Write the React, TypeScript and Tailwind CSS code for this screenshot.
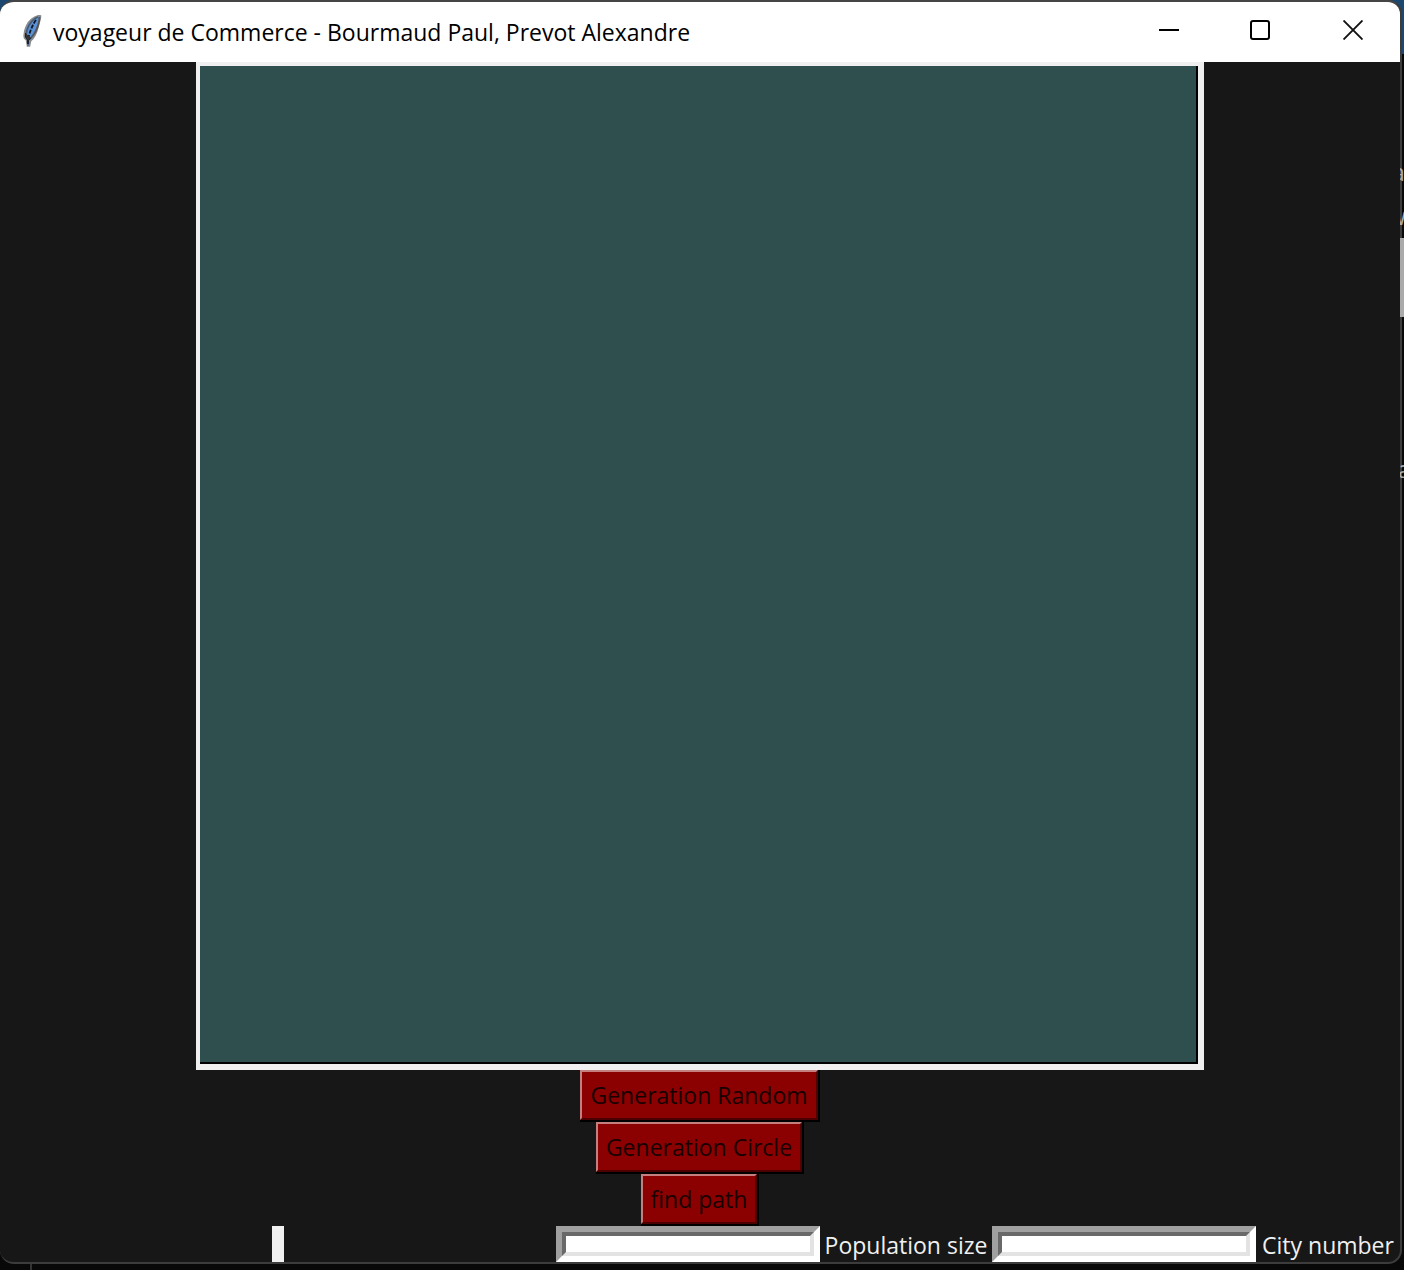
import { useId, useState } from "react";

function Feather() {
  return (
    <svg viewBox="0 0 20 34" className="h-[34px] w-5 shrink-0" aria-hidden="true">
      <path d="M17.500 0.500C12 1.500 6 6 4 12C2.500 16 1.500 19 2.500 23L4.500 25L5.500 31H7.500L8.500 26C12 23 14.500 18 16 12C17 8 18.500 4 18.500 1Z" fill="#5b93d8" stroke="#8a8a8a" strokeWidth="1.600" />
      <path d="M16 2C11 4 7 9 5 15L3.500 22" fill="none" stroke="#4a5a70" strokeWidth="1.800" />
      <path d="M17.500 2C17.500 7 15 15 12 19L8 24" fill="none" stroke="#555" strokeWidth="1.800" />
      <path d="M14 5C11 9 9.500 13 8 17L6 24V31" fill="none" stroke="#0d1522" strokeWidth="1.800" strokeDasharray="4 1.500" />
      <path d="M3.500 18L3.500 22L6 26L9 23" fill="#333" stroke="#222" strokeWidth="1" />
    </svg>
  );
}

function TitleBar() {
  return (
    <header className="flex h-[60px] items-center bg-white pl-[22px] text-black">
      <Feather />
      <h1 className="flex-1 pl-[11px] text-[23px] leading-8 whitespace-nowrap">
        voyageur de Commerce - Bourmaud Paul, Prevot Alexandre
      </h1>
      <div className="flex h-full pb-1">
        <button type="button" aria-label="Minimize" className="grid w-[90px] place-items-center">
          <svg viewBox="0 0 20 20" className="size-5">
            <path d="M0 10H20" stroke="black" strokeWidth="2" />
          </svg>
        </button>
        <button type="button" aria-label="Maximize" className="grid w-[92px] place-items-center">
          <svg viewBox="0 0 20 20" className="size-5">
            <rect x="1" y="1" width="18" height="18" rx="2" fill="none" stroke="black" strokeWidth="2" />
          </svg>
        </button>
        <button type="button" aria-label="Close" className="grid w-[94px] place-items-center">
          <svg viewBox="0 0 20 20" className="size-5">
            <path d="M0.500 0.500L19.500 19.500M19.500 0.500L0.500 19.500" stroke="#111" strokeWidth="1.900" />
          </svg>
        </button>
      </div>
    </header>
  );
}

function ActionButton({ label }: { label: string }) {
  return (
    <button
      type="button"
      className="h-[52px] border-r-2 border-b-2 border-black bg-[#8b0000] text-[23px] leading-8 text-[#180000]"
    >
      <span className="flex h-full items-center border-2 border-t-[#c57f7f] border-r-[#4d0000] border-b-[#4d0000] border-l-[#c57f7f] px-2">
        {label}
      </span>
    </button>
  );
}

function Field({ label, width }: { label: string; width: string }) {
  const id = useId();
  const [value, setValue] = useState("");
  return (
    <>
      <div className="h-9 w-[264px] border-[6px] border-t-[#a0a0a0] border-r-white border-b-white border-l-[#a0a0a0]">
        <input
          id={id}
          value={value}
          onChange={(e) => setValue(e.target.value)}
          className="block h-6 w-full border-4 border-t-[#696969] border-r-[#e3e3e3] border-b-[#e3e3e3] border-l-[#696969] bg-white text-xs text-black outline-none"
        />
      </div>
      <label htmlFor={id} className={`${width} pt-0.5 text-center text-[23px] leading-8 whitespace-nowrap text-[#f0f0f0]`}>
        {label}
      </label>
    </>
  );
}

export default function App() {
  return (
    <div className="flex min-h-screen bg-[#080808] font-['Open_Sans','Noto_Sans',sans-serif]">
      <div className="mr-0.5 flex min-w-0 flex-1 flex-col bg-linear-to-b from-[#1b4770] from-5% to-[#080808] to-5%">
        <main className="overflow-hidden rounded-[14px] border-t-2 border-r-2 border-b-2 border-t-[#454545] border-r-[#3c3c3c] border-b-[#3c3c3c] bg-[#171717]">
          <TitleBar />
          <div className="flex flex-col items-center">
            <div className="border-t-4 border-r-[6px] border-b-[6px] border-l-4 border-[#f0f0f0]">
              <canvas width={996} height={996} className="box-content block border-r-2 border-b-2 border-black bg-[#2f4f4f]" />
            </div>
            <ActionButton label="Generation Random" />
            <ActionButton label="Generation Circle" />
            <ActionButton label="find path" />
          </div>
          <div className="flex h-9 items-center">
            <div className="flex h-full flex-1 justify-center">
              <div className="w-3 bg-[#f0f0f0]" />
            </div>
            <Field label="Population size" width="w-[172px]" />
            <Field label="City number" width="w-[144px]" />
          </div>
        </main>
        <div className="ml-[30px] h-1.5 w-0.5 bg-[#333]" />
      </div>
      <aside aria-hidden="true" className="z-10 -ml-1 flex w-1 flex-col overflow-hidden text-[23px] leading-8 text-[#aaa]">
        <div className="ml-0.5 h-[54px] bg-[#1b4770]" />
        <div className="mt-[102px] h-8 -indent-2">a</div>
        <div className="mt-3 h-8 -indent-3">w</div>
        <div className="mt-1.5 h-[79px] bg-[#aaa]" />
        <div className="mt-[136px] h-8 -indent-0.5">a</div>
      </aside>
    </div>
  );
}
